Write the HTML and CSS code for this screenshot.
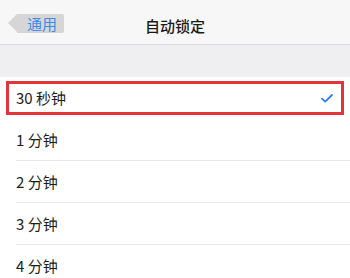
FILE: index.html
```html
<!DOCTYPE html>
<html lang="zh-CN">
<head>
    <meta charset="UTF-8">
    <meta name="viewport" content="width=device-width, initial-scale=1.0">
    <title>自动锁定</title>
    <link rel="stylesheet" href="styles.css">
</head>
<body>
    <header class="nav">
        <div class="nav-left">
            <a class="back" href="#">通用</a>
        </div>
        <h1 class="nav-title">自动锁定</h1>
        <div class="nav-right"></div>
    </header>

    <div class="spacer"></div>

    <ul class="options">
        <li class="option selected">
            <span>30 秒钟</span>
            <svg class="check" width="12" height="9" viewBox="0 0 12 9">
                <path d="M1 4.6 L4.2 7.6 L11 1" fill="none" stroke="#2f7cf0" stroke-width="1.8" stroke-linecap="round" stroke-linejoin="round"/>
            </svg>
            <div class="highlight"></div>
        </li>
        <li class="option"><span>1 分钟</span></li>
        <li class="option"><span>2 分钟</span></li>
        <li class="option"><span>3 分钟</span></li>
        <li class="option"><span>4 分钟</span></li>
    </ul>
</body>
</html>
```

FILE: styles.css
```css
body {
    margin: 0;
    font-family: "Noto Sans CJK SC", "Noto Sans", sans-serif;
    background: #ffffff;
    color: #1c1c1c;
}

.nav {
    display: grid;
    grid-template-columns: 1fr auto 1fr;
    align-items: center;
    height: 44px;
    background: #f7f7f7;
    border-bottom: 1px solid #dcdcdc;
}

.nav-left {
    padding-left: 17px;
}

.back {
    position: relative;
    display: inline-block;
    height: 19px;
    line-height: 19px;
    padding: 0 7px 0 10px;
    margin-top: 4px;
    background: #d6d6d6;
    border-radius: 0 2px 2px 0;
    color: #3d8ce8;
    font-size: 15px;
    text-decoration: none;
}

/* arrow tip of the back button */
.back::before {
    content: "";
    position: absolute;
    left: -9px;
    top: 0;
    border-top: 9.5px solid transparent;
    border-bottom: 9.5px solid transparent;
    border-right: 9px solid #d6d6d6;
}

.nav-title {
    margin: 0;
    padding-top: 6px;
    font-size: 15px;
    font-weight: 500;
    color: #1a1a1a;
}

.spacer {
    height: 32px;
    background: #efeff2;
}

.options {
    list-style: none;
    margin: 0;
    padding: 0 0 0 16px;
    background: #fff;
}

.option {
    position: relative;
    display: flex;
    align-items: center;
    justify-content: space-between;
    height: 41px;
    padding-right: 17px;
    border-bottom: 1px solid #e8e8e8;
    font-size: 15px;
    color: #1c1c1c;
}

.option.selected {
    border-bottom-color: #fff;
}

.check {
    margin-top: 2px;
}

/* red annotation frame */
.highlight {
    position: absolute;
    left: -10px;
    top: 4px;
    right: 6px;
    height: 28px;
    border: 3px solid #e3343a;
}
```
